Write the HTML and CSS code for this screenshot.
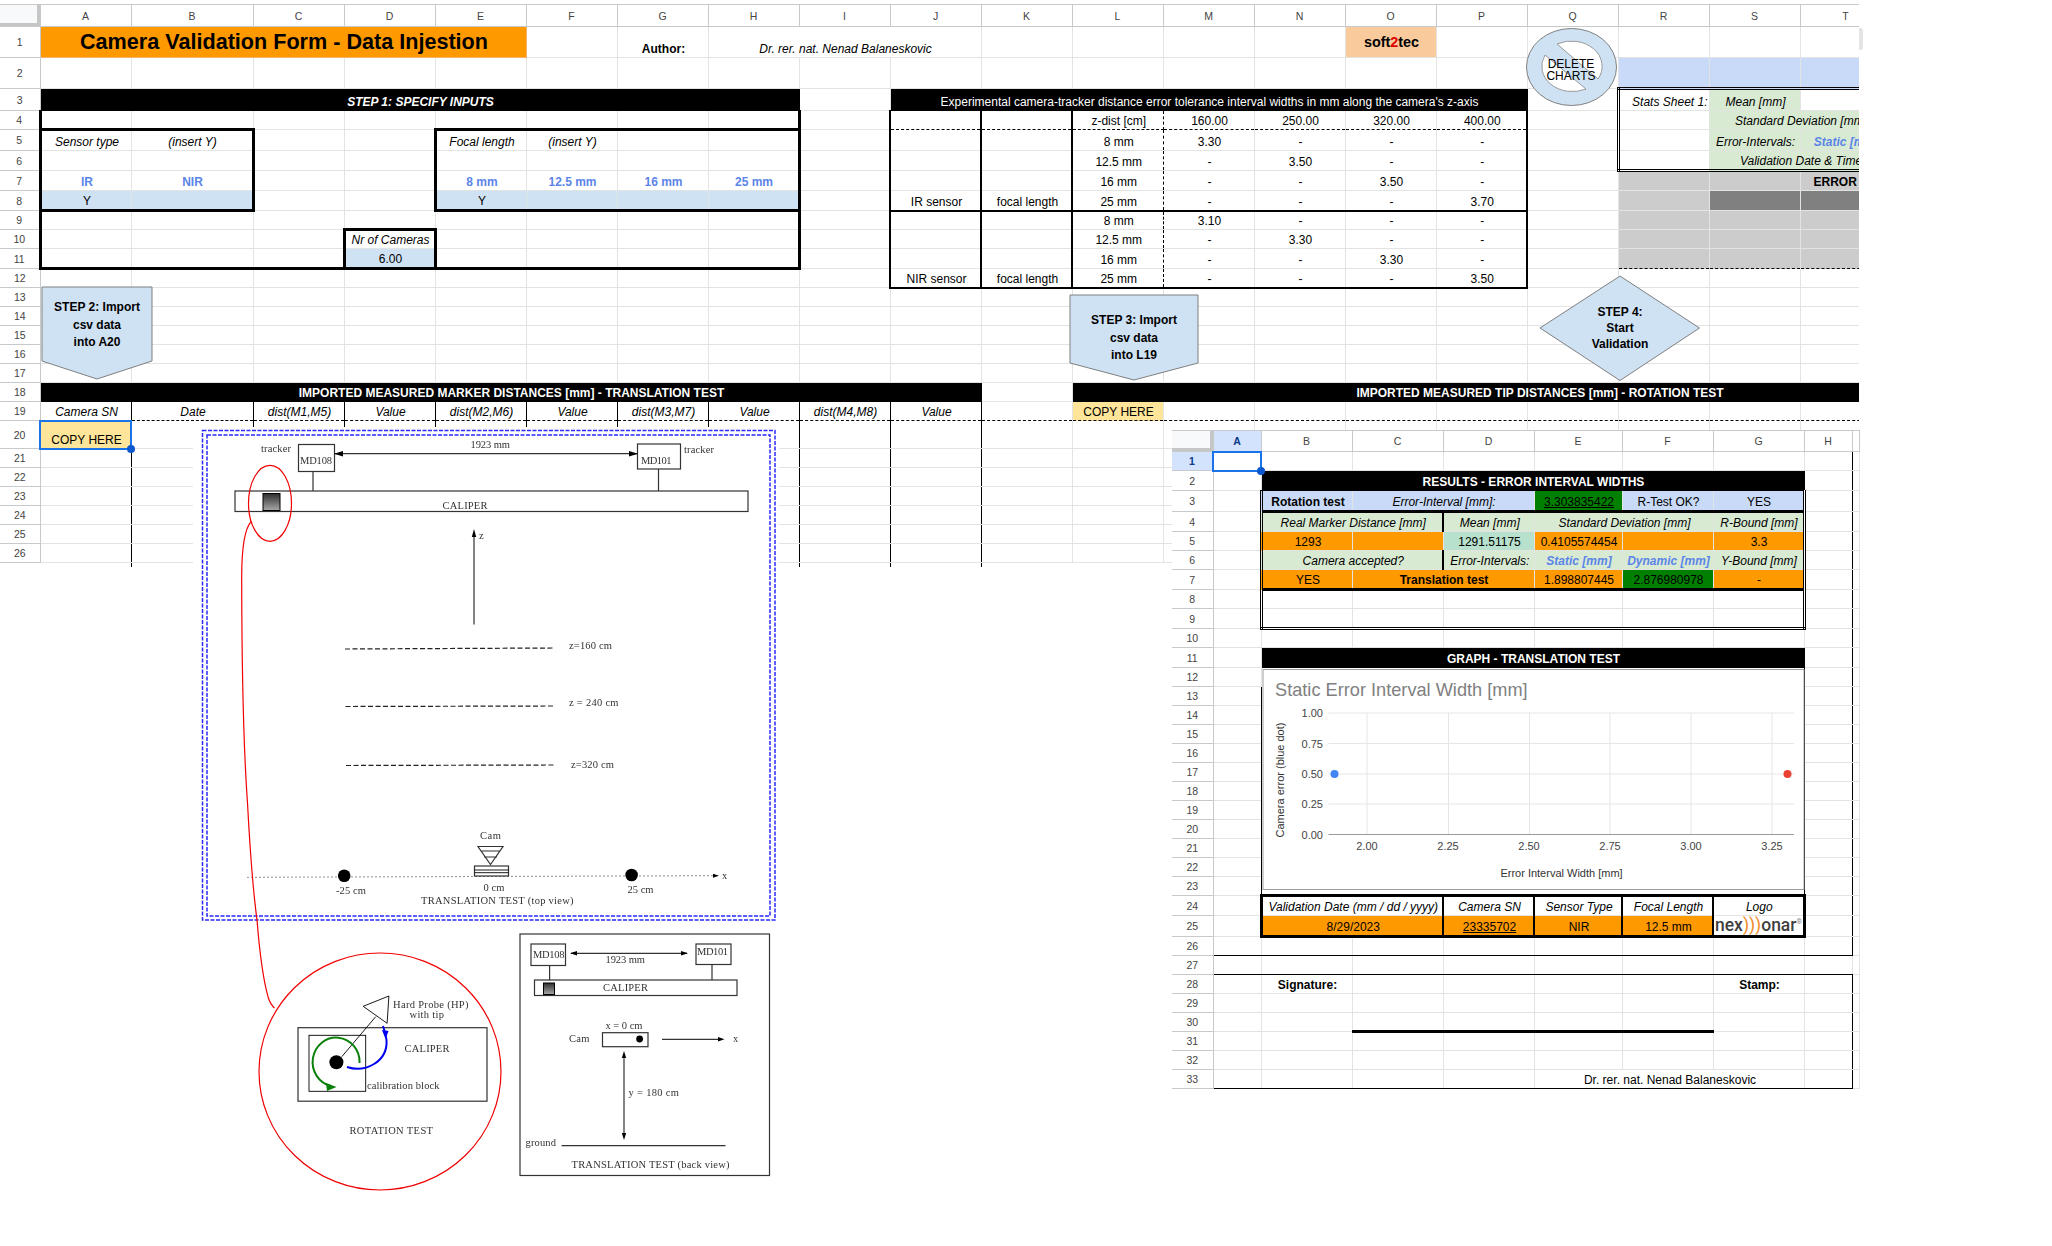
FILE: index.html
```html
<!DOCTYPE html>
<html lang="en">
<head>
    <meta charset="UTF-8">
    <title>Camera Validation Form - Data Injestion</title>
    <link rel="stylesheet" href="styles.css">
</head>
<body>
<div class="page">
    <div class="main">
        <table class="sheet main-sheet">
            <colgroup><col class="col-head"><col><col class="col-b"><col><col><col><col><col><col><col><col><col><col><col><col><col><col><col><col><col><col></colgroup>
            <tr class="h22 letters"><th class="corner"></th><th>A</th><th>B</th><th>C</th><th>D</th><th>E</th><th>F</th><th>G</th><th>H</th><th>I</th><th>J</th><th>K</th><th>L</th><th>M</th><th>N</th><th>O</th><th>P</th><th>Q</th><th>R</th><th>S</th><th>T</th></tr>
            <tr class="h31"><th>1</th><td colspan="5" class="title">Camera Validation Form - Data Injestion</td><td></td><td class="c b low">Author:</td><td colspan="3" class="c i low">Dr. rer. nat. Nenad Balaneskovic</td><td></td><td></td><td></td><td></td><td class="soft">soft<span>2</span>tec</td><td></td><td></td><td></td><td></td><td></td></tr>
            <tr class="h31"><th>2</th><td></td><td></td><td></td><td></td><td></td><td></td><td></td><td></td><td></td><td></td><td></td><td></td><td></td><td></td><td></td><td></td><td></td><td class="cornflower"></td><td class="cornflower"></td><td class="cornflower"></td></tr>
            <tr class="h22"><th>3</th><td colspan="8" class="bar c b i">STEP 1: SPECIFY INPUTS</td><td></td><td colspan="7" class="bar c">Experimental camera-tracker distance error tolerance interval widths in mm along the camera's z-axis</td><td></td><td class="ddl ddt r i">Stats Sheet 1:</td><td class="mint c i ddt">Mean [mm]</td><td class="ddt"></td></tr>
            <tr><th>4</th><td class="tl tb"></td><td class="tb"></td><td></td><td></td><td class="tb"></td><td class="tb"></td><td class="tb"></td><td class="tr tb"></td><td></td><td class="nl nr db"></td><td class="nr db"></td><td class="c dr db">z-dist [cm]</td><td class="c db">160.00</td><td class="c db">250.00</td><td class="c db">320.00</td><td class="c db nr">400.00</td><td></td><td class="ddl"></td><td colspan="2" class="mint c i">Standard Deviation [mm]</td></tr>
            <tr class="h21"><th>5</th><td class="c i tl">Sensor type</td><td class="c i tr">(insert Y)</td><td></td><td></td><td class="c i tl">Focal length</td><td class="c i">(insert Y)</td><td></td><td class="tr"></td><td></td><td class="nl nr"></td><td class="nr"></td><td class="c dr">8 mm</td><td class="c">3.30</td><td class="c">-</td><td class="c">-</td><td class="c nr">-</td><td></td><td class="ddl"></td><td class="mint c i">Error-Intervals:</td><td class="mint c i b blue">Static [mm]</td></tr>
            <tr class="h20"><th>6</th><td class="tl"></td><td class="tr"></td><td></td><td></td><td class="tl"></td><td></td><td></td><td class="tr"></td><td></td><td class="nl nr"></td><td class="nr"></td><td class="c dr">12.5 mm</td><td class="c">-</td><td class="c">3.50</td><td class="c">-</td><td class="c nr">-</td><td></td><td class="ddl ddb"></td><td colspan="2" class="mint c i ddb">Validation Date &amp; Time</td></tr>
            <tr class="h20"><th>7</th><td class="c b blue tl">IR</td><td class="c b blue tr">NIR</td><td></td><td></td><td class="c b blue tl">8 mm</td><td class="c b blue">12.5 mm</td><td class="c b blue">16 mm</td><td class="c b blue tr">25 mm</td><td></td><td class="nl nr"></td><td class="nr"></td><td class="c dr">16 mm</td><td class="c">-</td><td class="c">-</td><td class="c">3.50</td><td class="c nr">-</td><td></td><td class="grey dl"></td><td class="grey"></td><td class="grey b error">ERROR</td></tr>
            <tr class="h20"><th>8</th><td class="sky c tl tb">Y</td><td class="sky tr tb"></td><td></td><td></td><td class="sky c tl tb">Y</td><td class="sky tb"></td><td class="sky tb"></td><td class="sky tr tb"></td><td></td><td class="nl nr nb c">IR sensor</td><td class="nr nb c">focal length</td><td class="c dr nb">25 mm</td><td class="c nb">-</td><td class="c nb">-</td><td class="c nb">-</td><td class="c nr nb">3.70</td><td></td><td class="grey dl"></td><td class="dark"></td><td class="dark"></td></tr>
            <tr><th>9</th><td class="tl"></td><td></td><td></td><td></td><td></td><td></td><td></td><td class="tr"></td><td></td><td class="nl nr"></td><td class="nr"></td><td class="c dr">8 mm</td><td class="c">3.10</td><td class="c">-</td><td class="c">-</td><td class="c nr">-</td><td></td><td class="grey dl"></td><td class="grey"></td><td class="grey"></td></tr>
            <tr><th>10</th><td class="tl"></td><td></td><td></td><td class="c i tl tr tt">Nr of Cameras</td><td></td><td></td><td></td><td class="tr"></td><td></td><td class="nl nr"></td><td class="nr"></td><td class="c dr">12.5 mm</td><td class="c">-</td><td class="c">3.30</td><td class="c">-</td><td class="c nr">-</td><td></td><td class="grey dl"></td><td class="grey"></td><td class="grey"></td></tr>
            <tr class="h20"><th>11</th><td class="tl tb"></td><td class="tb"></td><td class="tb"></td><td class="sky c tl tr tb">6.00</td><td class="tb"></td><td class="tb"></td><td class="tb"></td><td class="tr tb"></td><td></td><td class="nl nr"></td><td class="nr"></td><td class="c dr">16 mm</td><td class="c">-</td><td class="c">-</td><td class="c">3.30</td><td class="c nr">-</td><td></td><td class="grey dl db"></td><td class="grey db"></td><td class="grey db"></td></tr>
            <tr><th>12</th><td></td><td></td><td></td><td></td><td></td><td></td><td></td><td></td><td></td><td class="nl nr nb c">NIR sensor</td><td class="nr nb c">focal length</td><td class="c dr nb">25 mm</td><td class="c nb">-</td><td class="c nb">-</td><td class="c nb">-</td><td class="c nr nb">3.50</td><td></td><td></td><td></td><td></td></tr>
            <tr><th>13</th><td></td><td></td><td></td><td></td><td></td><td></td><td></td><td></td><td></td><td></td><td></td><td></td><td></td><td></td><td></td><td></td><td></td><td></td><td></td><td></td></tr>
            <tr><th>14</th><td></td><td></td><td></td><td></td><td></td><td></td><td></td><td></td><td></td><td></td><td></td><td></td><td></td><td></td><td></td><td></td><td></td><td></td><td></td><td></td></tr>
            <tr><th>15</th><td></td><td></td><td></td><td></td><td></td><td></td><td></td><td></td><td></td><td></td><td></td><td></td><td></td><td></td><td></td><td></td><td></td><td></td><td></td><td></td></tr>
            <tr><th>16</th><td></td><td></td><td></td><td></td><td></td><td></td><td></td><td></td><td></td><td></td><td></td><td></td><td></td><td></td><td></td><td></td><td></td><td></td><td></td><td></td></tr>
            <tr><th>17</th><td></td><td></td><td></td><td></td><td></td><td></td><td></td><td></td><td></td><td></td><td></td><td></td><td></td><td></td><td></td><td></td><td></td><td></td><td></td><td></td></tr>
            <tr><th>18</th><td colspan="10" class="bar c b">IMPORTED MEASURED MARKER DISTANCES [mm] - TRANSLATION TEST</td><td></td><td colspan="9" class="bar c b tip-title">IMPORTED MEASURED TIP DISTANCES [mm] - ROTATION TEST</td></tr>
            <tr><th>19</th><td class="c i lr">Camera SN</td><td class="c i lr db">Date</td><td class="c i lr db">dist(M1,M5)</td><td class="c i lr db">Value</td><td class="c i lr db">dist(M2,M6)</td><td class="c i lr db">Value</td><td class="c i lr db">dist(M3,M7)</td><td class="c i lr db">Value</td><td class="c i lr db">dist(M4,M8)</td><td class="c i lr db">Value</td><td class="db"></td><td class="copy c db">COPY HERE</td><td class="db"></td><td class="db"></td><td class="db"></td><td class="db"></td><td class="db"></td><td class="db"></td><td class="db"></td><td class="db"></td></tr>
            <tr class="h28"><th>20</th><td class="copy c selected">COPY HERE<span class="handle"></span></td><td class="lr"></td><td class="lr"></td><td class="lr"></td><td class="lr"></td><td class="lr"></td><td class="lr"></td><td class="lr"></td><td class="lr"></td><td class="lr"></td><td></td><td></td><td></td><td></td><td></td><td></td><td></td><td></td><td></td><td></td></tr>
            <tr><th>21</th><td class="lr"></td><td class="lr"></td><td class="lr"></td><td class="lr"></td><td class="lr"></td><td class="lr"></td><td class="lr"></td><td class="lr"></td><td class="lr"></td><td class="lr"></td><td></td><td></td><td></td><td></td><td></td><td></td><td></td><td></td><td></td><td></td></tr>
            <tr><th>22</th><td class="lr"></td><td class="lr"></td><td class="lr"></td><td class="lr"></td><td class="lr"></td><td class="lr"></td><td class="lr"></td><td class="lr"></td><td class="lr"></td><td class="lr"></td><td></td><td></td><td></td><td></td><td></td><td></td><td></td><td></td><td></td><td></td></tr>
            <tr><th>23</th><td class="lr"></td><td class="lr"></td><td class="lr"></td><td class="lr"></td><td class="lr"></td><td class="lr"></td><td class="lr"></td><td class="lr"></td><td class="lr"></td><td class="lr"></td><td></td><td></td><td></td><td></td><td></td><td></td><td></td><td></td><td></td><td></td></tr>
            <tr><th>24</th><td class="lr"></td><td class="lr"></td><td class="lr"></td><td class="lr"></td><td class="lr"></td><td class="lr"></td><td class="lr"></td><td class="lr"></td><td class="lr"></td><td class="lr"></td><td></td><td></td><td></td><td></td><td></td><td></td><td></td><td></td><td></td><td></td></tr>
            <tr><th>25</th><td class="lr"></td><td class="lr"></td><td class="lr"></td><td class="lr"></td><td class="lr"></td><td class="lr"></td><td class="lr"></td><td class="lr"></td><td class="lr"></td><td class="lr"></td><td></td><td></td><td></td><td></td><td></td><td></td><td></td><td></td><td></td><td></td></tr>
            <tr><th>26</th><td class="lr"></td><td class="lr"></td><td class="lr"></td><td class="lr"></td><td class="lr"></td><td class="lr"></td><td class="lr"></td><td class="lr"></td><td class="lr"></td><td class="lr"></td><td></td><td></td><td></td><td></td><td></td><td></td><td></td><td></td><td></td><td></td></tr>
            <tr class="h4"><th class="stub"></th><td class="stub lr"></td><td class="stub"></td><td class="stub"></td><td class="stub"></td><td class="stub"></td><td class="stub"></td><td class="stub"></td><td class="stub lr"></td><td class="stub lr"></td><td class="stub lr"></td><td colspan="10" class="stub"></td></tr>
        </table>
    </div>
    <div class="scroll-thumb"></div>

    <!-- shapes and pasted pictures floating over the sheet, in page coordinates -->
    <svg class="floats" width="2052" height="1246">
        <defs>
            <linearGradient id="fade" x1="0" y1="0" x2="0" y2="1">
                <stop offset="0" stop-color="#2e2e2e"/>
                <stop offset="1" stop-color="#a8a8a8"/>
            </linearGradient>
        </defs>
        <g class="shape">
            <polygon points="42,287 152,287 152,361 97,379 42,361"/>
            <polygon points="1070,295 1198,295 1198,363 1134,380 1070,363"/>
            <polygon points="1620,276 1699.5,328 1620,380.5 1540,328"/>
            <ellipse cx="1571.5" cy="67" rx="45" ry="38.5"/>
            <path class="hole" d="M1557 44 A30.7 25.3 0 0 1 1598 79 Z"/>
            <path class="hole" d="M1545 55 A30.7 25.3 0 0 0 1586 89 Z"/>
        </g>
        <g class="shape-text">
            <text x="97" y="311">STEP 2: Import</text>
            <text x="97" y="329">csv data</text>
            <text x="97" y="346">into A20</text>
            <text x="1134" y="324">STEP 3: Import</text>
            <text x="1134" y="342">csv data</text>
            <text x="1134" y="359">into L19</text>
            <text x="1620" y="316">STEP 4:</text>
            <text x="1620" y="332">Start</text>
            <text x="1620" y="348">Validation</text>
        </g>
        <g class="delete-text">
            <text x="1571" y="68">DELETE</text>
            <text x="1571" y="80">CHARTS</text>
        </g>

        <!-- top view -->
        <rect class="white" x="193" y="427" width="586" height="498"/>
        <g class="scan">
            <rect class="frame-blue" x="202.5" y="430.5" width="572.5" height="489.5"/>
            <rect class="frame-blue" x="207" y="435" width="563" height="481"/>
            <rect class="line" x="298.5" y="444.5" width="36" height="27"/>
            <rect class="line" x="637.5" y="444" width="43" height="25"/>
            <path class="line" d="M334 453.7H638M313 471V491M658.5 469V491M474 624.5V534"/>
            <polygon points="334,453.7 343,451 343,456.5"/>
            <polygon points="638,453.7 629,451 629,456.5"/>
            <polygon points="474,529 471.8,537 476.2,537"/>
            <rect class="line" x="235" y="491" width="513" height="20.5"/>
            <rect class="block" x="263" y="493.5" width="17" height="17"/>
            <path class="dashes" d="M345 649L553.5 648M345.5 706.5L555.5 706M346 765.5L555.5 765"/>
            <path class="dots" d="M247.5 877.3L714 875.7"/>
            <polygon points="719,875.7 713,873.7 713,877.7"/>
            <circle cx="344.2" cy="875.7" r="6.3"/>
            <circle cx="631.6" cy="875" r="6.3"/>
            <path class="line" d="M478 846.5H503L490.5 864.5ZM481 851H500M484 857H497"/>
            <rect class="line" x="474.5" y="866" width="34" height="10"/>
            <path class="thin" d="M474.5 870H508.5M474.5 872.7H508.5"/>
            <g class="tex">
                <text x="261" y="451.5" textLength="30">tracker</text>
                <text x="300" y="464" textLength="32">MD108</text>
                <text x="470.5" y="448" textLength="39.5">1923 mm</text>
                <text x="641" y="464" textLength="30.5">MD101</text>
                <text x="684" y="453" textLength="30">tracker</text>
                <text x="442.5" y="509" textLength="45">CALIPER</text>
                <text x="479" y="539" textLength="4.5">z</text>
                <text x="569" y="648.5" textLength="43">z=160 cm</text>
                <text x="569" y="706" textLength="49.5">z = 240 cm</text>
                <text x="571" y="768" textLength="43">z=320 cm</text>
                <text x="722" y="879" textLength="4.5">x</text>
                <text x="336" y="893.5" textLength="30">-25 cm</text>
                <text x="483.5" y="890.5" textLength="21">0 cm</text>
                <text x="627.5" y="892.5" textLength="26">25 cm</text>
                <text x="421" y="903.5" textLength="152.5">TRANSLATION TEST (top view)</text>
                <text x="480" y="838.5" textLength="21">Cam</text>
            </g>
        </g>

        <!-- back view -->
        <rect class="white" x="520" y="933.5" width="249.5" height="242"/>
        <g class="scan">
            <rect class="line" x="520" y="934" width="249.5" height="241.5"/>
            <rect class="line" x="531" y="944" width="34.5" height="21.5"/>
            <rect class="line" x="696" y="944" width="35" height="20.5"/>
            <path class="line" d="M571 953.3H687M549.6 965.5V980M712 964.5V980M662 1039.3H720M624 1056V1136"/>
            <polygon points="570,953.3 577,951 577,955.6"/>
            <polygon points="688,953.3 681,951 681,955.6"/>
            <polygon points="724.5,1039.3 718,1037 718,1041.6"/>
            <polygon points="624,1051 621.8,1058 626.2,1058"/>
            <polygon points="624,1140 621.8,1133 626.2,1133"/>
            <rect class="line" x="534.5" y="980" width="202.5" height="15.5"/>
            <rect class="block" x="543.5" y="983" width="11" height="11.5"/>
            <rect class="line" x="602.5" y="1032.7" width="45.5" height="14"/>
            <circle cx="639.6" cy="1039" r="3.4"/>
            <path class="line" d="M561.5 1145.7H725.5"/>
            <g class="tex">
                <text x="533" y="957.7" textLength="31.5">MD108</text>
                <text x="697" y="955" textLength="31">MD101</text>
                <text x="605.5" y="963" textLength="39.5">1923 mm</text>
                <text x="603" y="990.7" textLength="45">CALIPER</text>
                <text x="605.5" y="1028.7" textLength="37">x = 0 cm</text>
                <text x="569" y="1042.3" textLength="20.5">Cam</text>
                <text x="733" y="1041.7" textLength="5">x</text>
                <text x="628.5" y="1095.7" textLength="50.5">y = 180 cm</text>
                <text x="525.5" y="1146" textLength="30.5">ground</text>
                <text x="571.5" y="1167.7" textLength="158">TRANSLATION TEST (back view)</text>
            </g>
        </g>

        <!-- rotation test -->
        <g class="scan">
            <ellipse class="red" cx="270" cy="503.3" rx="21.5" ry="38"/>
            <path class="red" d="M251 521.7C244 530 241.5 550 241.7 580C241.8 650 243 740 247.5 803C250 850 253 890 257 920C259 945 262 975 268 996.7C270 1003 272 1006 274.6 1008"/>
            <ellipse class="red" cx="380" cy="1071.5" rx="121" ry="118.5"/>
            <rect class="line" x="298" y="1027.7" width="189" height="73.5"/>
            <rect class="thin" x="309" y="1035.3" width="56.7" height="56"/>
            <circle cx="336.4" cy="1062.3" r="7"/>
            <path class="thin" d="M341.8 1056.7L375.7 1016.7M363.2 1006.3L388.9 996L387.1 1023.3Z"/>
            <path class="green" d="M359.6 1063A23.5 24.5 0 1 0 331 1086"/>
            <polygon class="green-fill" points="336.5,1087 326,1083 327,1091"/>
            <path class="blue-arc" d="M347 1067C365 1073 388 1062 386.5 1040C386 1034 384.5 1030 383 1026"/>
            <polygon class="blue-fill" points="385.5,1039 382,1030 388.5,1031"/>
            <g class="tex">
                <text x="393" y="1007.7" textLength="75.5">Hard Probe (HP)</text>
                <text x="409.5" y="1018" textLength="34.5">with tip</text>
                <text x="404.5" y="1052.3" textLength="45">CALIPER</text>
                <text x="367" y="1088.7" textLength="72.5">calibration block</text>
                <text x="349.5" y="1134.3" textLength="83.5">ROTATION TEST</text>
            </g>
        </g>
    </svg>

    <!-- second sheet pasted as a picture -->
    <div class="results">
        <table class="sheet results-sheet">
            <colgroup><col class="r-head"><col class="r-a"><col class="r-b"><col class="r-b"><col class="r-b"><col class="r-e"><col class="r-b"><col class="r-b"><col class="r-a"><col class="r-end"></colgroup>
            <tr class="h21 letters"><th class="corner"></th><th class="picked">A</th><th>B</th><th>C</th><th>D</th><th>E</th><th>F</th><th>G</th><th>H</th><th></th></tr>
            <tr><th class="picked">1</th><td class="selected"><span class="handle"></span></td><td></td><td></td><td></td><td></td><td></td><td></td><td class="lr"></td><td></td></tr>
            <tr class="h20"><th>2</th><td></td><td colspan="6" class="bar c b">RESULTS - ERROR INTERVAL WIDTHS</td><td class="lr"></td><td></td></tr>
            <tr class="h21"><th>3</th><td></td><td class="cornflower c b ddl tb">Rotation test</td><td colspan="2" class="cornflower c i tb">Error-Interval [mm]:</td><td class="forest c u tb">3.303835422</td><td class="cornflower c tb">R-Test OK?</td><td class="cornflower c ddr tb">YES</td><td class="lr"></td><td></td></tr>
            <tr class="h20"><th>4</th><td></td><td colspan="2" class="mint c i ddl nr">Real Marker Distance [mm]</td><td class="mint c i">Mean [mm]</td><td colspan="2" class="mint c i">Standard Deviation [mm]</td><td class="mint c i ddr">R-Bound [mm]</td><td class="lr"></td><td></td></tr>
            <tr><th>5</th><td></td><td class="o c ddl">1293</td><td class="o"></td><td class="teal c">1291.51175</td><td class="o c">0.4105574454</td><td class="o"></td><td class="o c ddr">3.3</td><td class="lr"></td><td></td></tr>
            <tr><th>6</th><td></td><td colspan="2" class="mint c i ddl nr">Camera accepted?</td><td class="mint c i">Error-Intervals:</td><td class="mint c i b blue">Static [mm]</td><td class="mint c i b blue">Dynamic [mm]</td><td class="mint c i ddr">Y-Bound [mm]</td><td class="lr"></td><td></td></tr>
            <tr class="h20"><th>7</th><td></td><td class="o c ddl tb">YES</td><td colspan="2" class="o c b tb">Translation test</td><td class="o c tb">1.898807445</td><td class="forest c tb">2.876980978</td><td class="o c ddr tb">-</td><td class="lr"></td><td></td></tr>
            <tr><th>8</th><td></td><td class="ddl"></td><td></td><td></td><td></td><td></td><td class="ddr"></td><td class="lr"></td><td></td></tr>
            <tr class="h20"><th>9</th><td></td><td class="ddl ddb"></td><td class="ddb"></td><td class="ddb"></td><td class="ddb"></td><td class="ddb"></td><td class="ddr ddb"></td><td class="lr"></td><td></td></tr>
            <tr><th>10</th><td></td><td></td><td></td><td></td><td></td><td></td><td></td><td class="lr"></td><td></td></tr>
            <tr class="h20"><th>11</th><td></td><td colspan="6" class="bar c b">GRAPH - TRANSLATION TEST</td><td class="lr"></td><td></td></tr>
            <tr><th>12</th><td></td>
                <td colspan="6" rowspan="12" class="chart-cell">
                    <svg class="chart" viewBox="1261 668 544 228">
                        <rect class="chart-frame" x="1263" y="670.5" width="541" height="220"/>
                        <text class="chart-title" x="1275" y="697">Static Error Interval Width [mm]</text>
                        <path class="chart-grid" d="M1328.5 714H1794M1328.5 744.5H1794M1328.5 775H1794M1328.5 805H1794M1367 714V835M1448.5 714V835M1529.5 714V835M1610 714V835M1691 714V835M1772 714V835"/>
                        <path class="chart-axis" d="M1328.5 835.5H1794"/>
                        <circle class="dot-blue" cx="1334.5" cy="775" r="4"/>
                        <circle class="dot-red" cx="1787.5" cy="775" r="4"/>
                        <g class="chart-y">
                            <text x="1323" y="718">1.00</text>
                            <text x="1323" y="748.5">0.75</text>
                            <text x="1323" y="779">0.50</text>
                            <text x="1323" y="809">0.25</text>
                            <text x="1323" y="840">0.00</text>
                        </g>
                        <g class="chart-x">
                            <text x="1367" y="851">2.00</text>
                            <text x="1448" y="851">2.25</text>
                            <text x="1529" y="851">2.50</text>
                            <text x="1610" y="851">2.75</text>
                            <text x="1691" y="851">3.00</text>
                            <text x="1772" y="851">3.25</text>
                            <text class="chart-label" x="1561.5" y="878">Error Interval Width [mm]</text>
                            <text class="chart-label" transform="translate(1284 781) rotate(-90)">Camera error (blue dot)</text>
                        </g>
                    </svg>
                </td>
                <td class="lr"></td><td></td></tr>
            <tr><th>13</th><td></td><td class="lr"></td><td></td></tr>
            <tr><th>14</th><td></td><td class="lr"></td><td></td></tr>
            <tr><th>15</th><td></td><td class="lr"></td><td></td></tr>
            <tr><th>16</th><td></td><td class="lr"></td><td></td></tr>
            <tr><th>17</th><td></td><td class="lr"></td><td></td></tr>
            <tr><th>18</th><td></td><td class="lr"></td><td></td></tr>
            <tr><th>19</th><td></td><td class="lr"></td><td></td></tr>
            <tr><th>20</th><td></td><td class="lr"></td><td></td></tr>
            <tr><th>21</th><td></td><td class="lr"></td><td></td></tr>
            <tr><th>22</th><td></td><td class="lr"></td><td></td></tr>
            <tr><th>23</th><td></td><td class="lr"></td><td></td></tr>
            <tr class="h20"><th>24</th><td></td><td colspan="2" class="c i tl tt nr">Validation Date (mm / dd / yyyy)</td><td class="c i tt nr">Camera SN</td><td class="c i tt nr">Sensor Type</td><td class="c i tt nr">Focal Length</td><td class="c i tt tr">Logo</td><td class="lr"></td><td></td></tr>
            <tr><th>25</th><td></td><td colspan="2" class="o c tl tb nr">8/29/2023</td><td class="o c u tb nr">23335702</td><td class="o c tb nr">NIR</td><td class="o c tb nr">12.5 mm</td><td class="logo tb tr">nex<span>)))</span>onar<sup>®</sup></td><td class="lr"></td><td></td></tr>
            <tr><th>26</th><td class="kb"></td><td class="kb"></td><td class="kb"></td><td class="kb"></td><td class="kb"></td><td class="kb"></td><td class="kb"></td><td class="lr kb"></td><td></td></tr>
            <tr><th>27</th><td class="kb"></td><td class="kb"></td><td class="kb"></td><td class="kb"></td><td class="kb"></td><td class="kb"></td><td class="kb"></td><td class="kb"></td><td></td></tr>
            <tr><th>28</th><td class="kl"></td><td class="c b">Signature:</td><td></td><td></td><td></td><td></td><td class="c b">Stamp:</td><td class="lr"></td><td></td></tr>
            <tr><th>29</th><td class="kl"></td><td></td><td></td><td></td><td></td><td></td><td></td><td class="lr"></td><td></td></tr>
            <tr><th>30</th><td class="kl"></td><td></td><td class="tb"></td><td class="tb"></td><td class="tb"></td><td class="tb"></td><td></td><td class="lr"></td><td></td></tr>
            <tr><th>31</th><td class="kl"></td><td></td><td></td><td></td><td></td><td></td><td></td><td class="lr"></td><td></td></tr>
            <tr><th>32</th><td class="kl"></td><td></td><td></td><td></td><td></td><td></td><td></td><td class="lr"></td><td></td></tr>
            <tr><th>33</th><td class="kl kb"></td><td class="kb"></td><td class="kb"></td><td class="kb"></td><td colspan="3" class="c kb">Dr. rer. nat. Nenad Balaneskovic</td><td class="lr kb"></td><td></td></tr>
        </table>
    </div>
</div>
</body>
</html>
```

FILE: styles.css
```css
body {
    margin: 0;
    background: #fff;
    font-family: "Liberation Sans", Arial, sans-serif;
    font-size: 12px;
    color: #000;
}

.page {
    position: relative;
    width: 2052px;
    height: 1246px;
    overflow: hidden;
}

.main {
    width: 1859px;
    padding-top: 4px;
    overflow: hidden;
}

/* sheets */
.sheet {
    border-collapse: collapse;
    table-layout: fixed;
}

.main-sheet {
    width: 1891px;
}

col {
    width: 91px;
}

.col-head {
    width: 40px;
}

.col-b {
    width: 122px;
}

tr {
    height: 19px;
}

.h4 { height: 4px; }
.h20 { height: 20px; }
.h21 { height: 21px; }
.h22 { height: 22px; }
.h28 { height: 28px; }
.h31 { height: 31px; }

th {
    padding: 0;
    border-right: 1px solid #c8c9ca;
    border-bottom: 1px solid #c8c9ca;
    font-size: 10.5px;
    font-weight: normal;
    color: #444;
    background: #fff;
}

.letters th {
    border-top: 1px solid #c8c9ca;
}

.corner {
    background: #f8f9fa;
    box-shadow: inset -3px -3px 0 #c4c7c5;
}

.picked {
    background: #d3e3fd;
    color: #0b3a8a;
    font-weight: bold;
}

td {
    padding: 0 1px 0 3px;
    border-right: 1px solid #e2e3e3;
    border-bottom: 1px solid #e2e3e3;
    line-height: 15px;
    white-space: nowrap;
    vertical-align: bottom;
    text-align: left;
}

.stub {
    padding: 0;
    border-right: none;
    border-bottom: none;
    background: none;
}

/* text */
.c { text-align: center; }
.r { text-align: right; }
.b { font-weight: bold; }
.i { font-style: italic; }
.u { text-decoration: underline; }
.low { padding-bottom: 0; }
.blue { color: #5b85e8; }

.title {
    background: #ff9900;
    font-size: 21.6px;
    font-weight: bold;
    line-height: 26px;
    text-align: center;
    vertical-align: middle;
    border-color: #f6b26b;
}

.soft {
    background: #f9cb9c;
    font-size: 14.4px;
    font-weight: bold;
    text-align: center;
    vertical-align: middle;
}

.soft span {
    color: #e00000;
}

.error {
    padding-left: 13px;
}

.tip-title {
    padding-left: 118px;
}

.logo {
    padding: 0 0 0 1px;
    font-family: Roboto, sans-serif;
    font-size: 17.5px;
    font-weight: 500;
    line-height: 19px;
    color: #3f3f3f;
    background: #fff;
    overflow: hidden;
}

.logo span {
    color: #f08a24;
    font-weight: 400;
}

.logo sup {
    font-size: 7px;
    line-height: 0;
    color: #888;
}

/* fills */
.bar { background: #000; color: #fff; border-color: #000; }
.sky { background: #cfe2f3; }
.cornflower { background: #c9daf8; }
.mint { background: #d9ead3; }
.teal { background: #b7e1cd; }
.o { background: #ff9900; }
.forest { background: #007f00; }
.copy { background: #ffe599; }
.grey { background: #cccccc; }
.dark { background: #808080; }

/* cell borders */
.tl { border-left: 3px solid #000; }
.tr { border-right: 3px solid #000; }
.tt { border-top: 3px solid #000; }
.tb { border-bottom: 3px solid #000; }
.nl { border-left: 2px solid #000; }
.nr { border-right: 2px solid #000; }
.nb { border-bottom: 2px solid #000; }
.lr { border-right: 1px solid #000; }
.kl { border-left: 1px solid #000; }
.kb { border-bottom: 1px solid #000; }
.dr { border-right: 1px dashed #000; }
.db { border-bottom: 1px dashed #000; }
.dl { border-left: 1px dashed #000; }
.ddl { border-left: 3px double #000; }
.ddr { border-right: 3px double #000; }
.ddt { border-top: 3px double #000; }
.ddb { border-bottom: 3px double #000; }

.selected {
    position: relative;
    border: 2px solid #1a73e8;
}

.handle {
    position: absolute;
    right: -5px;
    bottom: -5px;
    width: 8px;
    height: 8px;
    border-radius: 50%;
    background: #0b57d0;
}

.scroll-thumb {
    position: absolute;
    left: 1859px;
    top: 28px;
    width: 4px;
    height: 22px;
    border-radius: 0 3px 3px 0;
    background: #e4e4e4;
}

/* floating shapes and pictures */
.floats {
    position: absolute;
    left: 0;
    top: 0;
}

.shape polygon,
.shape ellipse {
    fill: #cfe2f3;
    stroke: #7f7f7f;
    stroke-width: 1;
}

.shape .hole {
    fill: #fff;
    stroke: #999;
    stroke-width: 1;
}

.shape-text text {
    font-size: 12px;
    font-weight: bold;
    text-anchor: middle;
}

.delete-text text {
    font-size: 12px;
    text-anchor: middle;
}

.white {
    fill: #fff;
}

.scan {
    filter: blur(0.3px);
}

.tex text {
    font-family: "Liberation Serif", serif;
    font-size: 10.5px;
    fill: #333;
}

.frame-blue {
    fill: none;
    stroke: #2a2aff;
    stroke-width: 1.5;
    stroke-dasharray: 4 1.5;
}

.line {
    fill: none;
    stroke: #333;
    stroke-width: 1.2;
}

.thin {
    fill: none;
    stroke: #000;
    stroke-width: 0.9;
}

.block {
    fill: url(#fade);
    stroke: #000;
    stroke-width: 1;
}

.dashes {
    fill: none;
    stroke: #222;
    stroke-width: 1.2;
    stroke-dasharray: 5 2.5;
}

.dots {
    fill: none;
    stroke: #222;
    stroke-width: 1;
    stroke-dasharray: 1 3;
}

.red {
    fill: none;
    stroke: #f00000;
    stroke-width: 1.2;
}

.green {
    fill: none;
    stroke: #0a800a;
    stroke-width: 2;
}

.green-fill {
    fill: #0a800a;
}

.blue-arc {
    fill: none;
    stroke: #0000f0;
    stroke-width: 2;
}

.blue-fill {
    fill: #0000f0;
}

/* results picture */
.results {
    position: absolute;
    left: 1172px;
    top: 430px;
    background: #fff;
}

.results-sheet {
    width: 687px;
}

.r-head { width: 41px; }
.r-a { width: 48px; }
.r-b { width: 91px; }
.r-e { width: 88px; }
.r-end { width: 7px; }

.chart-cell {
    position: relative;
    padding: 0;
    border-left: 1px solid #000;
    border-right: 1px solid #000;
    background: #fff;
}

.chart {
    position: absolute;
    left: -1px;
    top: -1px;
    width: 544px;
    height: 228px;
}

.chart-frame {
    fill: #fff;
    stroke: #9e9e9e;
    stroke-width: 1;
}

.chart-title {
    font-size: 18.2px;
    fill: #808080;
}

.chart-grid {
    fill: none;
    stroke: #e6e6e6;
    stroke-width: 1;
}

.chart-axis {
    fill: none;
    stroke: #9a9a9a;
    stroke-width: 1.2;
}

.dot-blue { fill: #4285f4; }
.dot-red { fill: #ea4335; }

.chart-y text {
    font-size: 11px;
    fill: #444;
    text-anchor: end;
}

.chart-x text {
    font-size: 11px;
    fill: #444;
    text-anchor: middle;
}

.chart-x .chart-label {
    font-size: 11px;
    fill: #333;
}
```
